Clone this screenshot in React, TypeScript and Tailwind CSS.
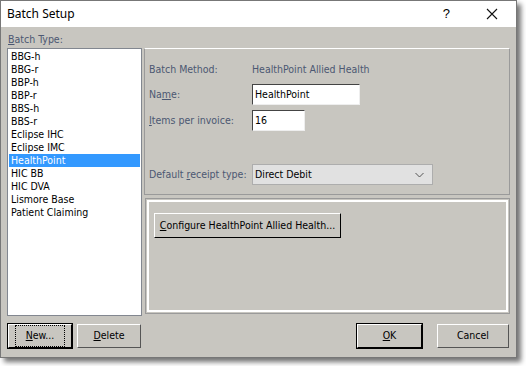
import React from "react";

const items = [
  "BBG-h",
  "BBG-r",
  "BBP-h",
  "BBP-r",
  "BBS-h",
  "BBS-r",
  "Eclipse IHC",
  "Eclipse IMC",
  "HealthPoint",
  "HIC BB",
  "HIC DVA",
  "Lismore Base",
  "Patient Claiming",
];

const font = { fontFamily: "Tahoma, 'DejaVu Sans Condensed', 'Liberation Sans', sans-serif" };

function Btn({ children, w, focus }: { children: React.ReactNode; w: string; focus?: boolean }) {
  return (
    <div
      className={`${w} h-[24px] flex items-center justify-center bg-[#c8c6c0] border border-t-white border-l-white ${
        focus ? "border-r-black border-b-black outline outline-1 outline-black" : "border-r-[#555] border-b-[#555]"
      } text-[10.5px] text-black`}
    >
      {focus ? (
        <span className="px-[10px] py-[2px] border border-dotted border-black">{children}</span>
      ) : (
        children
      )}
    </div>
  );
}

export default function App() {
  return (
    <div className="w-[526px] h-[366px] bg-white" style={font}>
      <div className="w-[517px] h-[358px] flex flex-col border border-[#777] bg-[#c8c6c0] shadow-[4px_4px_5px_rgba(0,0,0,0.55)]">
        {/* title bar */}
        <div className="h-[26px] bg-white flex items-center pl-[6px] pr-[14px] shrink-0">
          <span className="text-[12px] text-black flex-1" style={{ fontFamily: "'Noto Sans', 'Liberation Sans', sans-serif" }}>
            Batch Setup
          </span>
          <span className="text-[13px] text-black mr-[36px]" style={{ fontFamily: "'Liberation Sans', sans-serif" }}>?</span>
          <svg width="12" height="12" viewBox="0 0 12 12" className="mr-[4px]">
            <path d="M1 1 L11 11 M11 1 L1 11" stroke="#111" strokeWidth="1.1" />
          </svg>
        </div>

        {/* body */}
        <div className="flex-1 flex flex-col px-[6px] pt-[6px]">
          <div className="h-[15px] text-[10.5px] text-[#4c5872] leading-[13px] pl-[1px]">
            <u>B</u>atch Type:
          </div>
          <div className="flex gap-[2px]">
            {/* list */}
            <div className="w-[135px] h-[268px] bg-white border border-[#828790] pt-[1px] pl-[1px] pr-[1px]">
              {items.map((it) => (
                <div
                  key={it}
                  className={`h-[13px] leading-[13px] text-[10.5px] pl-[2px] ${
                    it === "HealthPoint" ? "bg-[#3399ff] text-white" : "text-black"
                  }`}
                >
                  {it}
                </div>
              ))}
            </div>

            {/* right column */}
            <div className="flex-1 flex flex-col gap-[3px]">
              <div className="h-[147px] border border-t-white border-l-[#9a9a9a] border-r-[#9a9a9a] border-b-[#9a9a9a] flex flex-col pl-[4px] text-[10.5px] text-[#4c5872]">
                <div className="flex items-center mt-[13px] h-[16px]">
                  <span className="w-[103px]">Batch Method:</span>
                  <span>HealthPoint Allied Health</span>
                </div>
                <div className="flex items-center mt-[6px] h-[21px]">
                  <span className="w-[103px]">
                    Na<u>m</u>e:
                  </span>
                  <div className="w-[108px] h-[21px] bg-white border border-t-[#444] border-l-[#444] border-r-[#eee] border-b-[#eee] flex items-center pl-[2px] text-black">
                    HealthPoint
                  </div>
                </div>
                <div className="flex items-center mt-[5px] h-[21px]">
                  <span className="w-[103px]">
                    <u>I</u>tems per invoice:
                  </span>
                  <div className="w-[53px] h-[21px] bg-white border border-t-[#444] border-l-[#444] border-r-[#eee] border-b-[#eee] flex items-center pl-[2px] text-black">
                    16
                  </div>
                </div>
                <div className="flex items-center mt-[33px] h-[21px]">
                  <span className="w-[103px]">
                    Default <u>r</u>eceipt type:
                  </span>
                  <div className="w-[181px] h-[21px] bg-[#e1e1e1] border border-[#adadad] flex items-center pl-[2px] pr-[8px] text-black">
                    <span className="flex-1">Direct Debit</span>
                    <svg width="9" height="6" viewBox="0 0 9 6">
                      <path d="M0.5 1 L4.5 5 L8.5 1" stroke="#555" fill="none" strokeWidth="1" />
                    </svg>
                  </div>
                </div>
              </div>

              <div className="h-[116px] border border-[#9a9a9a] ml-[1px] p-[1px]">
                <div className="h-full border-2 border-white pt-[11px] pl-[5px]">
                  <div className="w-[187px] h-[25px] flex items-center justify-center bg-[#c8c6c0] border border-t-white border-l-white border-r-black border-b-black text-[10.5px] text-black">
                    <span>
                      <u>C</u>onfigure HealthPoint Allied Health...
                    </span>
                  </div>
                </div>
              </div>
            </div>
          </div>

          {/* bottom buttons */}
          <div className="flex items-center mt-[8px] pl-[1px] pr-[1px]">
            <Btn w="w-[64px]" focus>
              <u>N</u>ew...
            </Btn>
            <div className="w-[5px]" />
            <Btn w="w-[64px]">
              <u>D</u>elete
            </Btn>
            <div className="flex-1" />
            <div className="w-[65px] h-[24px] flex items-center justify-center bg-[#c8c6c0] border border-t-white border-l-white border-r-black border-b-black outline outline-1 outline-black text-[10.5px] text-black">
              <u>O</u>K
            </div>
            <div className="w-[15px]" />
            <Btn w="w-[72px]">Cancel</Btn>
          </div>
        </div>
      </div>
    </div>
  );
}
